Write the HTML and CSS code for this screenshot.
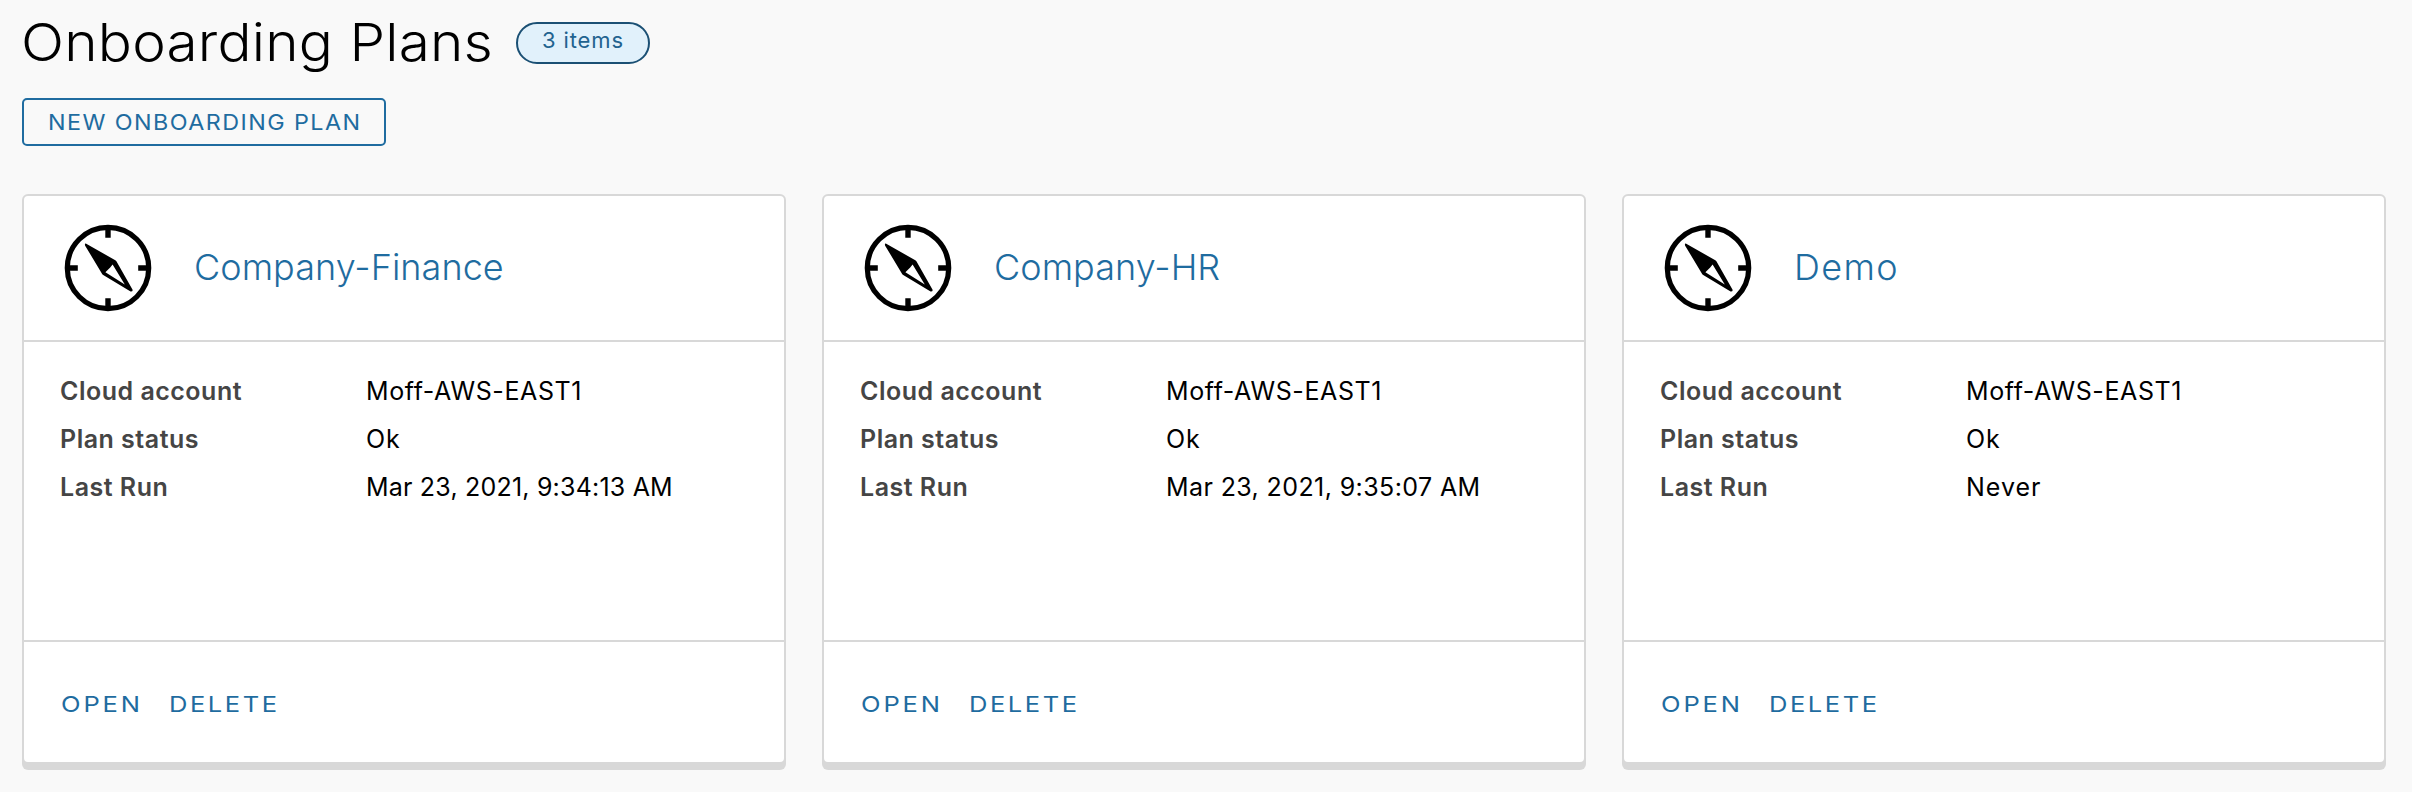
FILE: index.html
```html
<!DOCTYPE html>
<html lang="en">
<head>
<meta charset="utf-8">
<title>Onboarding Plans</title>
<link rel="stylesheet" href="styles.css">
</head>
<body>
<svg class="defs" aria-hidden="true">
  <symbol id="compass" viewBox="0 0 88 88">
    <circle cx="44" cy="44" r="40.7" fill="none" stroke="#000" stroke-width="5.2"/>
    <path d="M44 3v10.8M44 85V74.2M3 44h10.8M85 44H74.2" fill="none" stroke="#000" stroke-width="5.4"/>
    <path fill="#000" fill-rule="evenodd" d="M21.8 19.6 51.3 36.2Q52 36.6 52.4 37.3L68.6 65.8Q68.9 67.8 66.6 67.6L39.2 51Q38.4 50.5 38 49.7L21 21.4Q20.6 19.4 21.8 19.6ZM48.6 40.4 46.2 43.4 41.4 48.2 60.8 60.6Z"/>
  </symbol>
</svg>
<header class="page-header">
  <h1 class="page-title">Onboarding Plans</h1>
  <span class="badge">3 items</span>
</header>
<button class="btn-outline"><span>NEW ONBOARDING PLAN</span></button>
<main class="cards">
  <section class="card">
    <div class="card-header"><svg class="icon"><use href="#compass"/></svg><a class="card-name">Company-Finance</a></div>
    <dl class="card-body">
      <dt>Cloud account</dt><dd class="account">Moff-AWS-EAST1</dd>
      <dt>Plan status</dt><dd>Ok</dd>
      <dt>Last Run</dt><dd class="date">Mar 23, 2021, 9:34:13 AM</dd>
    </dl>
    <div class="card-footer"><a class="open">OPEN</a><a>DELETE</a></div>
  </section>
  <section class="card">
    <div class="card-header"><svg class="icon"><use href="#compass"/></svg><a class="card-name">Company-HR</a></div>
    <dl class="card-body">
      <dt>Cloud account</dt><dd class="account">Moff-AWS-EAST1</dd>
      <dt>Plan status</dt><dd>Ok</dd>
      <dt>Last Run</dt><dd class="date wide">Mar 23, 2021, 9:35:07 AM</dd>
    </dl>
    <div class="card-footer"><a class="open">OPEN</a><a>DELETE</a></div>
  </section>
  <section class="card">
    <div class="card-header"><svg class="icon"><use href="#compass"/></svg><a class="card-name short">Demo</a></div>
    <dl class="card-body">
      <dt>Cloud account</dt><dd class="account">Moff-AWS-EAST1</dd>
      <dt>Plan status</dt><dd>Ok</dd>
      <dt>Last Run</dt><dd>Never</dd>
    </dl>
    <div class="card-footer"><a class="open">OPEN</a><a>DELETE</a></div>
  </section>
</main>
</body>
</html>
```

FILE: styles.css
```css
* { box-sizing: border-box; }
body {
  margin: 0;
  height: 792px;
  padding: 11px 26px 0 22px;
  background: #f9f9f9;
  color: #000;
  font-family: Inter, "Liberation Sans", sans-serif;
  overflow: hidden;
}
.defs { display: none; }
.page-header { display: flex; align-items: center; height: 64px; }
.page-title {
  margin: 0 0 0 -1px;
  width: 495px;
  font-size: 52px;
  font-weight: 300;
  line-height: 64px;
  letter-spacing: 0.2px;
  white-space: nowrap;
  transform: scaleX(1.09);
  transform-origin: left;
}
.badge {
  width: 134px;
  height: 42px;
  border: 2px solid #1b5074;
  border-radius: 21px;
  background: #e1f1fb;
  color: #22638f;
  font-size: 22px;
  line-height: 33px;
  letter-spacing: 0.9px;
  text-align: center;
}
.btn-outline {
  display: block;
  width: 364px;
  height: 48px;
  margin-top: 23px;
  padding: 0 0 0 24px;
  border: 2px solid #1f6ca0;
  border-radius: 5px;
  background: transparent;
  color: #1f6ca0;
  font: 400 22px/44px Inter, "Liberation Sans", sans-serif;
  text-align: left;
  white-space: nowrap;
}
.btn-outline span {
  display: block;
  letter-spacing: 1.35px;
  transform: scaleX(1.06);
  transform-origin: left;
}
.cards { display: grid; grid-template-columns: repeat(3, 1fr); gap: 36px; margin-top: 48px; }
.card {
  display: grid;
  grid-template-rows: 146px 300px 120px;
  height: 570px;
  border: 2px solid #d8d8d8;
  border-radius: 6px;
  background: #fff;
  box-shadow: 0 6px 0 0 #d8d8d8;
}
.card-header { display: flex; align-items: center; padding-left: 40px; border-bottom: 2px solid #d8d8d8; }
.icon { width: 88px; height: 88px; }
.card-name { margin: -2px 0 0 42px; color: #1f6ca0; font-size: 36px; font-weight: 300; letter-spacing: 0.05px; }
.card-name.short { letter-spacing: 1.4px; }
.card-body {
  display: grid;
  grid-template-columns: 306px 1fr;
  grid-auto-rows: 48px;
  margin: 0;
  padding: 25px 0 0 36px;
  border-bottom: 2px solid #d8d8d8;
  font-size: 25px;
  line-height: 48px;
}
.card-body dt { color: #454545; font-weight: 600; letter-spacing: 0.5px; }
.card-body dd { margin: 0; letter-spacing: 1px; }
.card-body .account { letter-spacing: 0.6px; }
.card-body .date { letter-spacing: 0.2px; }
.card-body .date.wide { letter-spacing: 0.4px; }
.card-footer { display: flex; align-items: center; padding: 3px 0 0 37px; }
.card-footer a {
  color: #1f6ca0;
  font-size: 22px;
  font-weight: 400;
  letter-spacing: 2.2px;
  transform: scaleX(1.16);
  transform-origin: left;
}
.card-footer .open { width: 108px; letter-spacing: 2.5px; }
```
